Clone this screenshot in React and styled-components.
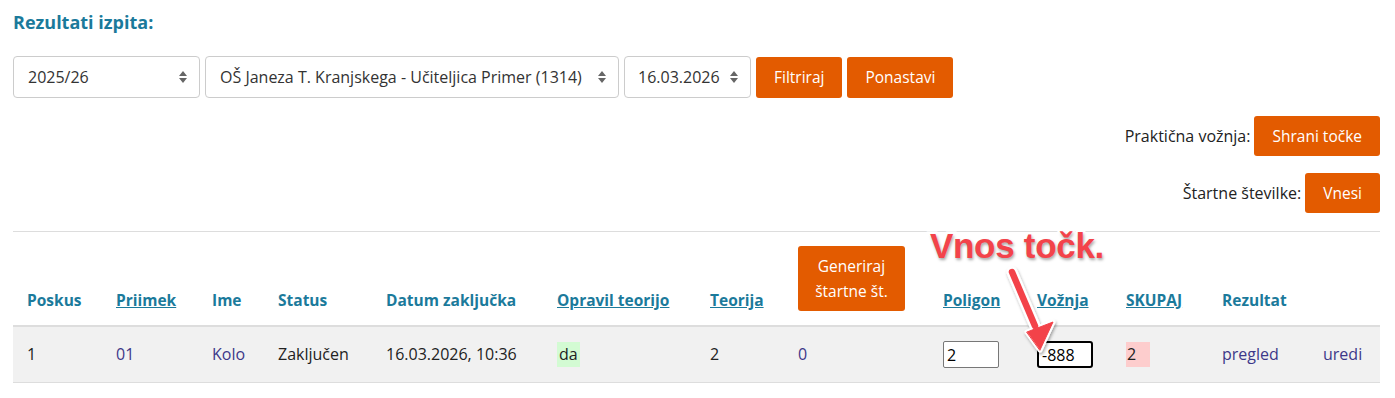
import React from 'react';
import styled, { createGlobalStyle } from 'styled-components';

const GlobalStyle = createGlobalStyle`
  body {
    margin: 0;
    background: #fff;
    font-family: "Open Sans", "Noto Sans", sans-serif;
    color: #222;
  }
`;

const Page = styled.div`
  position: relative;
  padding: 11px 15px 0 13px;
`;

const Title = styled.h2`
  margin: 0 0 22px;
  font-size: 18px;
  line-height: 23px;
  font-weight: 700;
  color: #1b7a9b;
`;

const FilterBar = styled.div`
  display: flex;
  gap: 5px;
  align-items: center;
`;

const SelectWrap = styled.div`
  position: relative;
  width: ${p => p.$w}px;
`;

const Select = styled.select`
  appearance: none;
  width: 100%;
  height: 42px;
  box-sizing: border-box;
  border: 1px solid #ccc;
  border-radius: 4px;
  background: #fff;
  padding: 0 28px 0 ${p => p.$pl || 14}px;
  font-family: inherit;
  font-size: 16px;
  color: #333;
`;

const Caret = styled.svg`
  position: absolute;
  right: 13px;
  top: 15px;
  pointer-events: none;
`;

const Button = styled.button`
  height: ${p => p.$h || 41}px;
  padding: 0 ${p => p.$px || 18}px;
  border: none;
  border-radius: 3px;
  background: #e35b00;
  color: #fff;
  font-family: inherit;
  font-size: 15.5px;
  line-height: 25px;
  cursor: pointer;
`;

const ActionRow = styled.div`
  display: flex;
  justify-content: flex-end;
  align-items: center;
  gap: 4px;
  margin-top: ${p => p.$mt}px;
  font-size: 16px;
`;

const Rule = styled.hr`
  border: none;
  border-top: 1px solid #ddd;
  margin: 18px 0 6px;
`;

const Table = styled.table`
  width: 100%;
  border-collapse: collapse;
  table-layout: fixed;
  font-size: 16px;
`;

const Th = styled.th`
  text-align: left;
  vertical-align: bottom;
  padding: 8px 14px 14px;
  line-height: 22px;
  font-weight: 700;
  font-size: 15.5px;
  color: #1b7a9b;
  border-bottom: 2px solid #ddd;
`;

const SortLink = styled.a`
  color: #1b7a9b;
  text-decoration: underline;
`;

const Tr = styled.tr`
  background: #f1f1f1;
  border-bottom: 1px solid #ddd;
`;

const Td = styled.td`
  padding: 14px 14px;
  line-height: 25px;
  vertical-align: middle;
`;

const RowLink = styled.a`
  color: #3d3889;
  text-decoration: none;
`;

const Tag = styled.span`
  display: inline-block;
  background: ${p => p.$bg};
  padding: 0 ${p => p.$px || 2}px;
`;

const PointInput = styled.input`
  width: 56px;
  height: 27px;
  box-sizing: border-box;
  margin-left: 0;
  padding: 0 3px;
  font-family: inherit;
  font-size: 16px;
  color: #000;
  background: #fff;
  border: ${p => (p.$focus ? '2px solid #000' : '1px solid #777')};
  border-radius: ${p => (p.$focus ? 3 : 2)}px;
  outline: none;
`;

const GenButton = styled(Button)`
  height: 65px;
  width: 107px;
  padding: 0 8px;
  line-height: 25px;
  font-weight: 400;
`;

const Note = styled.div`
  position: absolute;
  left: 930px;
  top: 226px;
  font-family: "Liberation Sans", Arial, sans-serif;
  font-weight: 700;
  font-size: 35px;
  color: #f3434a;
  -webkit-text-stroke: 5px #fff;
  paint-order: stroke fill;
  text-shadow: 1px 2px 3px rgba(0, 0, 0, 0.35);
  letter-spacing: -0.3px;
`;

const Arrow = styled.svg`
  position: absolute;
  left: 990px;
  top: 260px;
  overflow: visible;
`;

function Updown() {
  return (
    <Caret width="8" height="12" viewBox="0 0 8 12">
      <path d="M4 0 L8 5 H0 Z M0 7 H8 L4 12 Z" fill="#666" />
    </Caret>
  );
}

const cols = [89, 96, 66, 108, 171, 153, 88, 145, 94, 89, 96, 101, 71];

export default function App() {
  return (
    <Page>
      <GlobalStyle />
      <Title>Rezultati izpita:</Title>
      <FilterBar>
        <SelectWrap $w={187}>
          <Select $pl={14}><option>2025/26</option></Select>
          <Updown />
        </SelectWrap>
        <SelectWrap $w={414}>
          <Select><option>OŠ Janeza T. Kranjskega - Učiteljica Primer (1314)</option></Select>
          <Updown />
        </SelectWrap>
        <SelectWrap $w={127}>
          <Select $pl={13}><option>16.03.2026</option></Select>
          <Updown />
        </SelectWrap>
        <Button>Filtriraj</Button>
        <Button>Ponastavi</Button>
      </FilterBar>

      <ActionRow $mt={18}>
        <span>Praktična vožnja:</span>
        <Button $h={40}>Shrani točke</Button>
      </ActionRow>
      <ActionRow $mt={17}>
        <span>Štartne številke:</span>
        <Button $h={40}>Vnesi</Button>
      </ActionRow>

      <Rule />

      <Table>
        <colgroup>
          {cols.map((w, i) => <col key={i} style={{ width: w }} />)}
        </colgroup>
        <thead>
          <tr>
            <Th>Poskus</Th>
            <Th><SortLink>Priimek</SortLink></Th>
            <Th>Ime</Th>
            <Th>Status</Th>
            <Th>Datum zaključka</Th>
            <Th><SortLink>Opravil teorijo</SortLink></Th>
            <Th><SortLink>Teorija</SortLink></Th>
            <Th><GenButton>Generiraj štartne št.</GenButton></Th>
            <Th><SortLink>Poligon</SortLink></Th>
            <Th><SortLink>Vožnja</SortLink></Th>
            <Th><SortLink>SKUPAJ</SortLink></Th>
            <Th>Rezultat</Th>
            <Th></Th>
          </tr>
        </thead>
        <tbody>
          <Tr>
            <Td>1</Td>
            <Td><RowLink>01</RowLink></Td>
            <Td><RowLink>Kolo</RowLink></Td>
            <Td>Zaključen</Td>
            <Td>16.03.2026, 10:36</Td>
            <Td><Tag $bg="#d3fbd3">da</Tag></Td>
            <Td>2</Td>
            <Td><RowLink>0</RowLink></Td>
            <Td><PointInput defaultValue="2" /></Td>
            <Td><PointInput $focus defaultValue="-888" /></Td>
            <Td><Tag $bg="#fdcdcd" $px={1}>2&nbsp;&nbsp;&nbsp;</Tag></Td>
            <Td><RowLink>pregled</RowLink></Td>
            <Td><RowLink>uredi</RowLink></Td>
          </Tr>
        </tbody>
      </Table>

      <Note>Vnos točk.</Note>
      <Arrow width="70" height="100" viewBox="0 0 70 100">
        <defs>
          <filter id="sh" x="-30%" y="-30%" width="160%" height="160%">
            <feDropShadow dx="1" dy="2" stdDeviation="1.5" floodColor="#000" floodOpacity="0.35" />
          </filter>
        </defs>
        <g filter="url(#sh)" strokeLinejoin="round" strokeLinecap="round">
          <path d="M22 12 L45 66" stroke="#fff" strokeWidth="11" fill="none" />
          <path d="M37 72 L63 62 L50 90 Z" fill="#fff" stroke="#fff" strokeWidth="5" />
          <path d="M22 12 L45 66" stroke="#f3434a" strokeWidth="6.5" fill="none" />
          <path d="M37 72 L63 62 L50 90 Z" fill="#f3434a" stroke="#f3434a" strokeWidth="1" />
        </g>
      </Arrow>
    </Page>
  );
}
